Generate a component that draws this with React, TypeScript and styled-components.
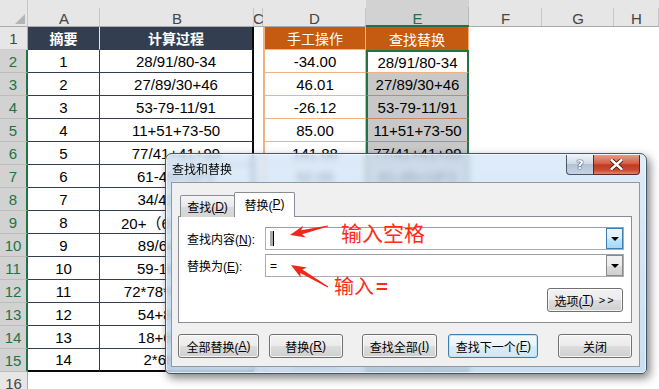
import React from "react";
import styled, { createGlobalStyle, css } from "styled-components";

const GlobalStyle = createGlobalStyle`
  html, body {
    margin: 0;
    padding: 0;
    background: #ffffff;
  }
  body {
    width: 659px;
    height: 389px;
    overflow: hidden;
    font-family: "Liberation Sans", "Noto Sans CJK SC", sans-serif;
  }
`;

type Row = { no: number; expr: string; value: string };

const ROWS: Row[] = [
  { no: 1, expr: "28/91/80-34", value: "-34.00" },
  { no: 2, expr: "27/89/30+46", value: "46.01" },
  { no: 3, expr: "53-79-11/91", value: "-26.12" },
  { no: 4, expr: "11+51+73-50", value: "85.00" },
  { no: 5, expr: "77/41+41+99", value: "141.88" },
  { no: 6, expr: "61-45+18*2", value: "52.00" },
  { no: 7, expr: "34/42*15+7", value: "19.14" },
  { no: 8, expr: "20+（61+35）/8", value: "32.00" },
  { no: 9, expr: "89/64+31-7", value: "25.39" },
  { no: 10, expr: "59-16*2+33", value: "60.00" },
  { no: 11, expr: "72*78*61-14/52", value: "342575.73" },
  { no: 12, expr: "54+87-29/4", value: "133.75" },
  { no: 13, expr: "18+69-32/8", value: "83.00" },
  { no: 14, expr: "2*68-35/7", value: "131.00" },
];

const LETTERS = ["A", "B", "C", "D", "E", "F", "G", "H"];
const GREEN = "#217346";
const CJK = `"Noto Sans CJK SC", sans-serif`;

// tapered red pointer, from tip (tx,ty) back to tail (sx,sy)
function arrowPoints(tx: number, ty: number, sx: number, sy: number) {
  const len = Math.hypot(sx - tx, sy - ty);
  const dx = (sx - tx) / len;
  const dy = (sy - ty) / len;
  const nx = -dy;
  const ny = dx;
  const p = (a: number, b: number) =>
    `${(tx + dx * a + nx * b).toFixed(1)},${(ty + dy * a + ny * b).toFixed(1)}`;
  return [p(0, 0), p(15, 6), p(12, 2), p(len, 0.6), p(len, -0.6), p(12, -2), p(15, -6)].join(" ");
}

export default function App() {
  return (
    <Screen>
      <GlobalStyle />
      <Sheet>
        <Corner>
          <CornerMark />
        </Corner>
        {LETTERS.map((l) => (
          <ColHead key={l} $active={l === "E"}>
            {l}
          </ColHead>
        ))}

        <RowHead>1</RowHead>
        <NavyCell $head>摘要</NavyCell>
        <NavyCell $head $edge>
          计算过程
        </NavyCell>
        <Blank />
        <OrangeCell $head>手工操作</OrangeCell>
        <PickCell $head>查找替换</PickCell>
        <Blank />
        <Blank />
        <Blank />

        {ROWS.map((r, i) => {
          const last = i === ROWS.length - 1;
          return (
            <React.Fragment key={r.no}>
              <RowHead $active>{r.no + 1}</RowHead>
              <NavyCell $last={last}>{r.no}</NavyCell>
              <NavyCell $edge $last={last}>
                {r.expr}
              </NavyCell>
              <Blank />
              <OrangeCell>{r.value}</OrangeCell>
              <PickCell $first={i === 0} $shade={i > 0} $last={last}>
                {r.expr}
              </PickCell>
              <Blank />
              <Blank />
              <Blank />
            </React.Fragment>
          );
        })}

        <RowHead>16</RowHead>
        {LETTERS.map((l) => (
          <Blank key={l} />
        ))}
      </Sheet>

      <Frame>
        <Glass />
        <Dialog>
          <TitleBar>
            <Title>查找和替换</Title>
            <Caption>
              <HelpBox>?</HelpBox>
              <CloseBox>
                <svg width="13" height="11" viewBox="0 0 13 11">
                  <path
                    d="M1.5 1 L11.5 10 M11.5 1 L1.5 10"
                    stroke="#4a1006"
                    strokeWidth="4.2"
                    strokeLinecap="round"
                  />
                  <path
                    d="M1.5 1 L11.5 10 M11.5 1 L1.5 10"
                    stroke="#ffffff"
                    strokeWidth="2.4"
                    strokeLinecap="round"
                  />
                </svg>
              </CloseBox>
            </Caption>
          </TitleBar>
          <Client>
            <Tabs>
              <Tab>
                查找(<u>D</u>)
              </Tab>
              <Tab $active>
                替换(<u>P</u>)
              </Tab>
            </Tabs>
            <Pane>
              <Field>
                <Label>
                  查找内容(<u>N</u>):
                </Label>
                <Combo>
                  <ComboText>
                    <Caret />
                  </ComboText>
                  <DropButton $focus>
                    <DropArrow />
                  </DropButton>
                </Combo>
              </Field>
              <Field>
                <Label>
                  替换为(<u>E</u>):
                </Label>
                <Combo>
                  <ComboText>=</ComboText>
                  <DropButton>
                    <DropArrow />
                  </DropButton>
                </Combo>
              </Field>
              <OptionsRow>
                <PushButton $w={76}>
                  选项(<u>T</u>) <Chevrons>&gt;&gt;</Chevrons>
                </PushButton>
              </OptionsRow>
            </Pane>
            <ButtonRow>
              <PushButton $w={81}>
                全部替换(<u>A</u>)
              </PushButton>
              <PushButton $w={74} $ml={10}>
                替换(<u>R</u>)
              </PushButton>
              <PushButton $w={76} $ml={19}>
                查找全部(<u>I</u>)
              </PushButton>
              <PushButton $w={90} $ml={11} $default>
                查找下一个(<u>F</u>)
              </PushButton>
              <PushButton $w={74} $ml={20}>
                关闭
              </PushButton>
            </ButtonRow>
          </Client>
        </Dialog>
      </Frame>

      <Marks width="659" height="389" viewBox="0 0 659 389">
        <polygon points={arrowPoints(290, 235, 328, 226)} fill="#f0281c" />
        <polygon points={arrowPoints(291, 265, 328, 287)} fill="#f0281c" />
      </Marks>
      <Note $x={341} $y={219} $size={21}>
        输入空格
      </Note>
      <Note $x={334} $y={273} $size={20}>
        输入<Equals>=</Equals>
      </Note>
    </Screen>
  );
}

const Screen = styled.div`
  position: relative;
  width: 659px;
  height: 389px;
  overflow: hidden;
  background: #fff;
`;

const Sheet = styled.div`
  display: grid;
  grid-template-columns: 28px 72px 154px 9px 103px 103px 73px 72px 1fr;
  grid-template-rows: 27px repeat(16, 23px);
  font-size: 15px;
  color: #000;
`;

const Corner = styled.div`
  box-sizing: border-box;
  background: #e6e6e6;
  border-bottom: 1px solid #ababab;
  border-right: 1px solid #c6c6c6;
  display: flex;
  align-items: flex-end;
  justify-content: flex-end;
  padding: 0 2px 2px 0;
`;

const CornerMark = styled.div`
  width: 0;
  height: 0;
  border-left: 10px solid transparent;
  border-bottom: 10px solid #b4b4b4;
`;

const ColHead = styled.div<{ $active?: boolean }>`
  box-sizing: border-box;
  overflow: hidden;
  display: flex;
  justify-content: center;
  padding-top: 12px;
  line-height: 14px;
  font-size: 15px;
  color: #444;
  background: linear-gradient(#c6c6c6, #c6c6c6) right bottom / 1px 18px no-repeat, #e6e6e6;
  border-bottom: 1px solid #ababab;
  ${(p) =>
    p.$active &&
    css`
      color: ${GREEN};
      background: linear-gradient(#b8b8b8, #b8b8b8) right bottom / 1px 18px no-repeat, #d2d2d2;
      border-bottom: 2px solid ${GREEN};
    `}
`;

const RowHead = styled.div<{ $active?: boolean }>`
  box-sizing: border-box;
  display: flex;
  align-items: center;
  justify-content: center;
  font-size: 15px;
  color: #444;
  background: #e6e6e6;
  border-bottom: 1px solid #cfcfcf;
  border-right: 1px solid #ababab;
  ${(p) =>
    p.$active &&
    css`
      color: ${GREEN};
      background: #d2d2d2;
      border-bottom-color: #bdbdbd;
      border-right: 2px solid ${GREEN};
    `}
`;

const Cell = styled.div`
  box-sizing: border-box;
  display: flex;
  align-items: center;
  justify-content: center;
  white-space: nowrap;
  overflow: hidden;
  background: #fff;
`;

const NavyCell = styled(Cell)<{ $head?: boolean; $edge?: boolean; $last?: boolean }>`
  border-right: 1px solid #333f50;
  border-bottom: 1px solid #333f50;
  ${(p) =>
    p.$head &&
    css`
      background: #333f50;
      color: #fff;
      font-weight: bold;
      font-size: 14px;
      font-family: ${CJK};
      border-right-color: #e4e4e4;
    `}
  ${(p) =>
    p.$edge &&
    css`
      border-right: 2px solid #0a0a0a;
    `}
  ${(p) =>
    p.$last &&
    css`
      border-bottom: 2px solid #0a0a0a;
    `}
`;

const Blank = styled.div`
  background: #fff;
`;

const OrangeCell = styled(Cell)<{ $head?: boolean }>`
  border-left: 2px solid #f4b183;
  border-right: 1px solid #f4b183;
  border-bottom: 1px solid #f4b183;
  ${(p) =>
    p.$head &&
    css`
      background: #c55a11;
      color: #fff;
      font-size: 14px;
      font-family: ${CJK};
    `}
`;

const PickCell = styled(Cell)<{ $head?: boolean; $first?: boolean; $shade?: boolean; $last?: boolean }>`
  border-left: 2px solid ${GREEN};
  border-right: 2px solid ${GREEN};
  border-bottom: 1px solid #f4b183;
  ${(p) =>
    p.$shade &&
    css`
      background: #c8c8c8;
      border-bottom-color: #be8c6c;
    `}
  ${(p) =>
    p.$first &&
    css`
      border-top: 2px solid ${GREEN};
    `}
  ${(p) =>
    p.$last &&
    css`
      border-bottom: 2px solid ${GREEN};
    `}
  ${(p) =>
    p.$head &&
    css`
      background: #c55a11;
      color: #fff;
      font-size: 14px;
      font-family: ${CJK};
      border-left: 0;
      border-right: 1px solid #f4b183;
      border-bottom: 0;
    `}
`;

/* ---------- dialog (floating window over the sheet) ---------- */

const Frame = styled.div`
  position: absolute;
  left: 165px;
  top: 153px;
  width: 482px;
  height: 221px;
  border-radius: 7px 7px 5px 5px;
  box-shadow: 3px 4px 10px rgba(0, 0, 0, 0.5);
`;

const Glass = styled.div`
  position: absolute;
  inset: 0;
  border-radius: 7px 7px 5px 5px;
  backdrop-filter: blur(3px);
  background: linear-gradient(180deg, rgba(210, 228, 247, 0.72), rgba(184, 210, 238, 0.74));
`;

const Dialog = styled.div`
  position: relative;
  width: 100%;
  height: 100%;
  box-sizing: border-box;
  display: flex;
  flex-direction: column;
  padding: 0 6px 6px 5px;
  border: 1px solid rgba(35, 50, 70, 0.8);
  border-radius: 7px 7px 5px 5px;
  box-shadow: inset 0 0 0 1px rgba(255, 255, 255, 0.6);
  font-family: "Liberation Sans", "Noto Sans CJK SC", sans-serif;
  font-size: 12px;
  color: #000;
`;

const TitleBar = styled.div`
  height: 28px;
  display: flex;
  justify-content: space-between;
  align-items: flex-start;
`;

const Title = styled.div`
  margin-top: 7px;
  padding-left: 1px;
  line-height: 16px;
  font-family: ${CJK};
  font-size: 12px;
`;

const Caption = styled.div`
  display: flex;
  height: 20px;
  margin-top: 1px;
`;

const HelpBox = styled.div`
  box-sizing: border-box;
  width: 27px;
  height: 20px;
  display: flex;
  align-items: center;
  justify-content: center;
  border: 1px solid #4a5668;
  border-top: 0;
  border-right: 0;
  border-radius: 0 0 0 4px;
  background-color: #c3d1e1;
  background-image: linear-gradient(#edf2f8, #d0dbe8 45%, #b1c2d6 50%, #c6d4e4);
  color: #ffffff;
  font-weight: bold;
  font-size: 13px;
  font-family: "DejaVu Sans", sans-serif;
  text-shadow: 0 0 1px #2a3a50, 0 0 1px #2a3a50, 0 0 1px #2a3a50;
`;

const CloseBox = styled.div`
  box-sizing: border-box;
  width: 47px;
  height: 20px;
  display: flex;
  align-items: center;
  justify-content: center;
  border: 1px solid #5a2a22;
  border-top: 0;
  border-radius: 0 0 4px 0;
  background-color: #c7432a;
  background-image: linear-gradient(#e59c88, #d35e45 45%, #c23a20 52%, #cb4b30 80%, #de8670);
`;

const Client = styled.div`
  flex: 1;
  box-sizing: border-box;
  display: flex;
  flex-direction: column;
  padding: 9px 7px 8px 6px;
  background: #f0f0f0;
  border: 1px solid #8d99a6;
`;

const Tabs = styled.div`
  height: 25px;
  display: flex;
  align-items: flex-end;
  padding-left: 2px;
  margin-bottom: -1px;
`;

const Tab = styled.div<{ $active?: boolean }>`
  position: relative;
  box-sizing: border-box;
  width: 55px;
  height: 22px;
  display: flex;
  align-items: center;
  justify-content: center;
  border: 1px solid #898c95;
  border-bottom: 0;
  border-radius: 2px 2px 0 0;
  background: linear-gradient(#f5f5f5, #e8e8e8 50%, #dadada 51%, #d6d6d6);
  ${(p) =>
    p.$active &&
    css`
      width: 61px;
      height: 25px;
      margin-left: -1px;
      z-index: 1;
      background: #ffffff;
      padding-bottom: 2px;
    `}
`;

const Pane = styled.div`
  height: 107px;
  box-sizing: border-box;
  display: flex;
  flex-direction: column;
  gap: 4px;
  padding: 10px 7px 0 8px;
  background: #ffffff;
  border: 1px solid #898c95;
`;

const Field = styled.div`
  display: flex;
  align-items: center;
  height: 23px;
`;

const Label = styled.div`
  width: 78px;
  flex-shrink: 0;
  white-space: nowrap;
`;

const Combo = styled.div`
  flex: 1;
  height: 23px;
  box-sizing: border-box;
  display: flex;
  border: 1px solid #abadb3;
  border-top-color: #9c9ea6;
  background: #fff;
`;

const ComboText = styled.div`
  flex: 1;
  display: flex;
  align-items: center;
  padding-left: 4px;
`;

const Caret = styled.span`
  width: 3px;
  height: 15px;
  background: #a9a9a9;
  border-right: 1px solid #000;
`;

const DropButton = styled.div<{ $focus?: boolean }>`
  width: 17px;
  box-sizing: border-box;
  display: flex;
  align-items: center;
  justify-content: center;
  border: 1px solid #8a8a8a;
  background: linear-gradient(#f2f2f2, #ebebeb 50%, #dddddd 51%, #cfcfcf);
  ${(p) =>
    p.$focus &&
    css`
      border-color: #3c7fb1;
      background: linear-gradient(#eaf6fd, #d9f0fc 50%, #bee6fd 51%, #a7d9f5);
    `}
`;

const DropArrow = styled.span`
  width: 0;
  height: 0;
  border-left: 4px solid transparent;
  border-right: 4px solid transparent;
  border-top: 4px solid #000;
`;

const OptionsRow = styled.div`
  display: flex;
  justify-content: flex-end;
  margin-top: 7px;
  padding-right: 1px;
`;

const Chevrons = styled.span`
  margin-left: 5px;
  letter-spacing: 2px;
  font-size: 11px;
`;

const ButtonRow = styled.div`
  display: flex;
  margin-top: 11px;
`;

const PushButton = styled.div<{ $w: number; $ml?: number; $default?: boolean }>`
  width: ${(p) => p.$w}px;
  margin-left: ${(p) => p.$ml ?? 0}px;
  height: 24px;
  box-sizing: border-box;
  display: flex;
  align-items: center;
  justify-content: center;
  white-space: nowrap;
  border: 1px solid #707070;
  border-radius: 3px;
  background: linear-gradient(#f2f2f2, #ebebeb 50%, #dddddd 51%, #cfcfcf);
  box-shadow: inset 0 0 0 1px rgba(255, 255, 255, 0.75);
  ${(p) =>
    p.$default &&
    css`
      border-color: #3c7fb1;
      background: linear-gradient(#f4f9fd, #ebf4fb 50%, #dcecf8 51%, #d2e6f5);
      box-shadow: inset 0 0 0 1px #bfe4f8;
    `}
`;

/* ---------- annotations over the dialog ---------- */

const Marks = styled.svg`
  position: absolute;
  left: 0;
  top: 0;
  pointer-events: none;
`;

const Note = styled.div<{ $x: number; $y: number; $size: number }>`
  position: absolute;
  left: ${(p) => p.$x}px;
  top: ${(p) => p.$y}px;
  font-size: ${(p) => p.$size}px;
  line-height: 26px;
  color: #ff2a1a;
  font-family: ${CJK};
  white-space: nowrap;
`;

const Equals = styled.span`
  font-weight: bold;
  margin-left: 2px;
`;
